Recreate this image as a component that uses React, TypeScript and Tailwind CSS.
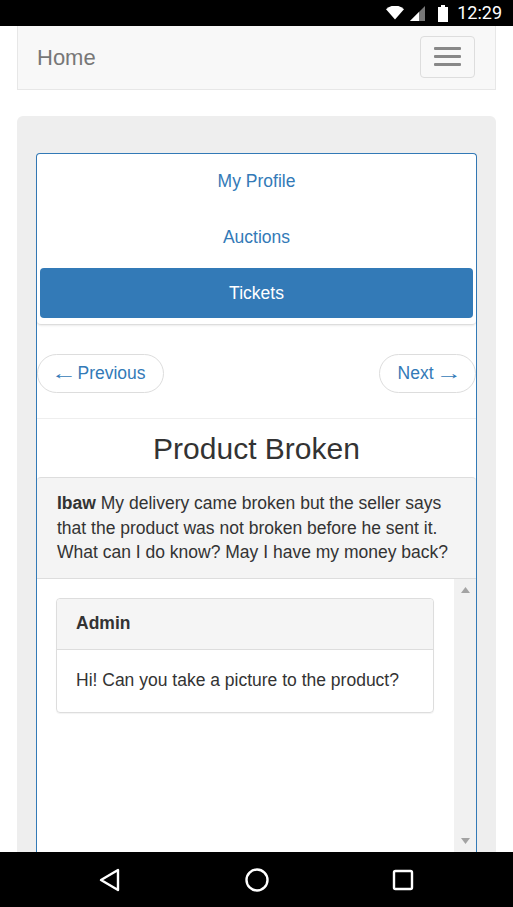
import type { FC } from "react";

const StatusBar: FC = () => (
  <div className="h-[26px] bg-black flex items-center justify-end pr-[11px] shrink-0">
    <svg width="18" height="14" viewBox="0 0 18 14" className="mr-[6px]">
      <path d="M0 3.2 A13 13 0 0 1 18 3.2 L9 13.5 Z" fill="#fff" />
    </svg>
    <svg width="15" height="15" viewBox="0 0 15 15" className="mr-[13px]">
      <path d="M15 0 L15 15 L0 15 Z" fill="#777" />
      <path d="M9 6 L9 15 L0 15 Z" fill="#fff" />
    </svg>
    <svg width="10" height="17" viewBox="0 0 10 17" className="mr-[9px]">
      <rect x="3" y="0" width="4" height="2" fill="#fff" />
      <rect x="0" y="2" width="10" height="15" fill="#fff" />
    </svg>
    <span className="text-white text-[18px] leading-none font-['Roboto',sans-serif]">12:29</span>
  </div>
);

const NavBar: FC = () => (
  <div className="h-[64px] bg-[#f8f8f8] border border-t-0 border-[#e7e7e7] flex items-center justify-between pl-[19px] pr-[19px] shrink-0">
    <span className="text-[22px] text-[#777]">Home</span>
    <div className="w-[55px] h-[42px] border border-[#ddd] rounded-[4px] flex flex-col items-center justify-center gap-[5px] mt-[-2px] mr-[1px]">
      <div className="w-[27px] h-[3px] bg-[#888] rounded-[1px]" />
      <div className="w-[27px] h-[3px] bg-[#888] rounded-[1px]" />
      <div className="w-[27px] h-[3px] bg-[#888] rounded-[1px]" />
    </div>
  </div>
);

const menu = ["My Profile", "Auctions", "Tickets"];

const BottomBar: FC = () => (
  <div className="h-[55px] bg-black flex items-center justify-between px-[98px] shrink-0">
    <svg width="24" height="26" viewBox="0 0 24 26">
      <path d="M20 3 L20 23 L3 13 Z" fill="none" stroke="#fff" strokeWidth="2.4" strokeLinejoin="round" />
    </svg>
    <svg width="26" height="26" viewBox="0 0 26 26">
      <circle cx="13" cy="13" r="10.5" fill="none" stroke="#fff" strokeWidth="2.4" />
    </svg>
    <svg width="24" height="24" viewBox="0 0 24 24">
      <rect x="3" y="3" width="18" height="18" rx="1.5" fill="none" stroke="#fff" strokeWidth="2.4" />
    </svg>
  </div>
);

export default function App() {
  return (
    <div className="w-[513px] h-[907px] flex flex-col bg-white overflow-hidden font-['Liberation_Sans',Arial,sans-serif]">
      <StatusBar />
      <div className="flex-1 flex flex-col px-[17px] min-h-0">
        <NavBar />
        <div className="mt-[26px] flex-1 min-h-0 bg-[#eee] rounded-t-[6px] pt-[37px] px-[19px] flex">
          <div className="flex-1 flex flex-col bg-white border border-b-0 border-[#337ab7] rounded-t-[4px] min-h-0">
            <div className="flex flex-col gap-[6px] px-[3px] pt-[2px] pb-[6px] rounded-b-[4px] border-b border-[#ddd] shadow-[0_1px_2px_rgba(0,0,0,0.08)]">
              {menu.map((m) => (
                <div
                  key={m}
                  className={
                    m === "Tickets"
                      ? "h-[50px] rounded-[4px] bg-[#337ab7] text-white text-[17.5px] flex items-center justify-center"
                      : "h-[50px] rounded-[4px] text-[#337ab7] text-[17.5px] flex items-center justify-center"
                  }
                >
                  {m}
                </div>
              ))}
            </div>
            <div className="flex justify-between pt-[29px] pb-[25px] border-b border-[#eee]">
              <div className="h-[39px] pl-[17px] pr-[17px] rounded-full border border-[#ddd] flex items-center text-[17.5px] text-[#337ab7]">
                <span className="inline-block scale-x-150 mr-[5px]">←</span>Previous
              </div>
              <div className="h-[39px] pl-[18px] pr-[17px] rounded-full border border-[#ddd] flex items-center text-[17.5px] text-[#337ab7]">
                Next<span className="inline-block scale-x-150 ml-[6px] mr-[1px]">→</span>
              </div>
            </div>
            <div className="h-[58px] flex items-center justify-center text-[30px] text-[#333]">Product Broken</div>
            <div className="bg-[#f4f4f4] border-t border-[#ddd] rounded-t-[4px] px-[20px] pt-[13px] pb-[13px] text-[17.5px] leading-[24.5px] text-[#333]">
              <b>Ibaw</b> My delivery came broken but the seller says that the product was not broken before he sent it. What can I do know? May I have my money back?
            </div>
            <div className="flex-1 min-h-0 flex border-t border-[#ddd]">
              <div className="flex-1 pt-[19px] pl-[19px] pr-[20px]">
                <div className="border border-[#ddd] rounded-[4px] shadow-[0_1px_1px_rgba(0,0,0,0.05)]">
                  <div className="h-[51px] bg-[#f5f5f5] border-b border-[#ddd] rounded-t-[4px] flex items-center px-[19px] text-[17.5px] font-bold text-[#333]">
                    Admin
                  </div>
                  <div className="h-[62px] flex items-center px-[19px] text-[17.5px] text-[#333]">
                    Hi! Can you take a picture to the product?
                  </div>
                </div>
              </div>
              <div className="w-[22px] bg-[#f1f1f1] flex flex-col items-center justify-between py-[8px]">
                <svg width="9" height="6" viewBox="0 0 9 6">
                  <path d="M0 6 L4.5 0 L9 6 Z" fill="#a3a3a3" />
                </svg>
                <svg width="9" height="6" viewBox="0 0 9 6">
                  <path d="M0 0 L9 0 L4.5 6 Z" fill="#a3a3a3" />
                </svg>
              </div>
            </div>
          </div>
        </div>
      </div>
      <BottomBar />
    </div>
  );
}
